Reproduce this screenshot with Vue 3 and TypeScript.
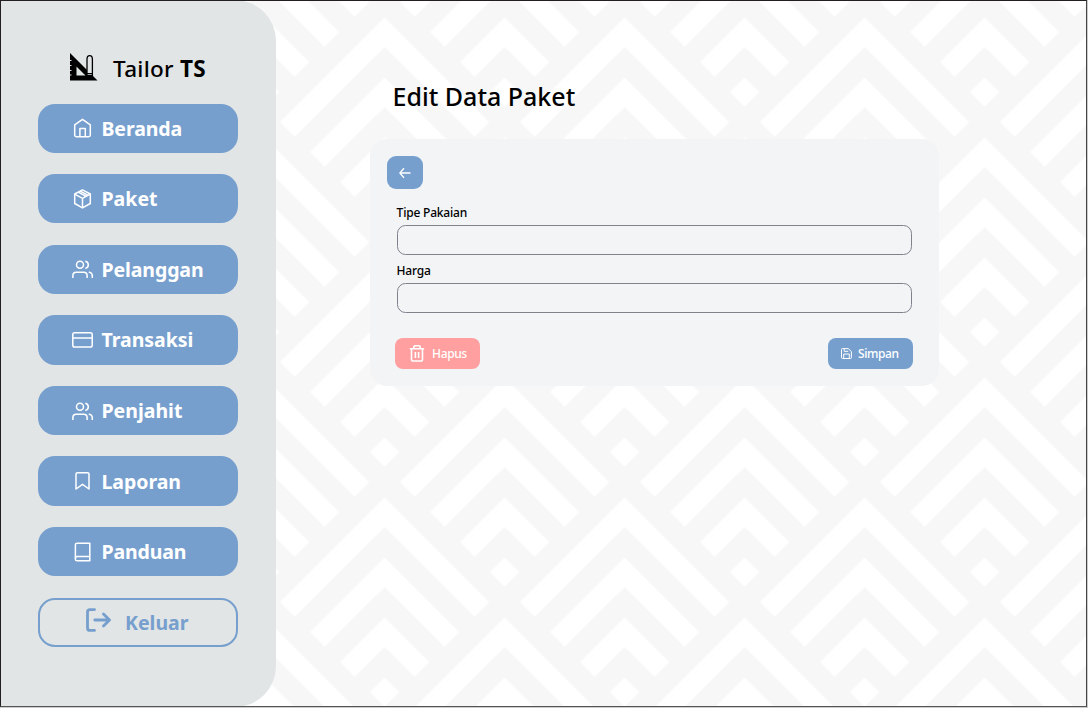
<script setup lang="ts">
interface MenuItem {
  label: string
  icon: string[]
  spacing: number
}

const users = [
  'M9 10.200a3.500 3.500 0 1 0 0-7 3.500 3.500 0 0 0 0 7z',
  'M1.900 20v-2.500a3.300 3.300 0 0 1 3.300-3.300h7.600a3.300 3.300 0 0 1 3.300 3.300V20',
  'M14.300 3.200c4 .8 4 6.400 0 7.200',
  'M17.800 13.900c2.100.5 3.500 1.900 3.500 3.800V20',
]

const menu: MenuItem[] = [
  { label: 'Beranda', spacing: -0.1, icon: ['M3.700 7.900 11.500 2.300l7.800 5.600V18a1.700 1.700 0 0 1-1.700 1.700H5.400A1.700 1.700 0 0 1 3.700 18z', 'M8.900 19.700v-8.300h5.400v8.300'] },
  { label: 'Paket', spacing: 0, icon: ['M11.500 1.900 19.300 6v9.500l-7.800 4.400-7.800-4.400V6z', 'M3.700 6.200l7.800 4.200 7.800-4.200M11.500 10.400v9.500M7.300 4.200l8 4.300M9.300 3.100l7.900 4.200'] },
  { label: 'Pelanggan', spacing: -0.1, icon: users },
  { label: 'Transaksi', spacing: -0.05, icon: ['M3.600 3.700h15.800a1.800 1.800 0 0 1 1.800 1.800v10.700a1.800 1.800 0 0 1-1.800 1.800H3.600a1.800 1.800 0 0 1-1.800-1.800V5.500a1.800 1.800 0 0 1 1.800-1.800z', 'M1.800 9h19.400'] },
  { label: 'Penjahit', spacing: 0, icon: users },
  { label: 'Laporan', spacing: -0.05, icon: ['M6.500 2.700h10a1.500 1.500 0 0 1 1.500 1.500V19l-6.500-4.700L5 19V4.200a1.500 1.500 0 0 1 1.500-1.500z'] },
  { label: 'Panduan', spacing: -0.15, icon: ['M6 2.200h12.800v17.600H6a1.600 1.600 0 0 1-1.600-1.600V3.800A1.600 1.600 0 0 1 6 2.200z', 'M4.400 17.200c0-1 .8-1.700 1.800-1.700h12.600'] },
]
</script>

<template>
  <div class="page">
    <svg class="backdrop" width="1088" height="708" aria-hidden="true">
      <defs>
        <g id="peak" fill="#fff">
          <path d="M0 0 104.700 104.700 90 119.400 0 29.700-90 119.400-104.700 104.700z" />
          <path d="M0 60 74.700 134.700 60 149.400 0 89.700-60 149.400-74.700 134.700z" />
          <path d="M0 120 44.700 164.700 30 179.400 0 149.700-30 179.400-44.700 164.700z" />
          <path d="M0 180 14.700 194.700 0 209.400-14.700 194.700z" />
        </g>
        <pattern id="peaks" width="240" height="240" x="264.670" y="17.400" patternUnits="userSpaceOnUse">
          <rect width="240" height="240" fill="#f7f7f7" />
          <use href="#peak" x="120" y="0" />
          <use href="#peak" x="0" y="120" />
          <use href="#peak" x="240" y="120" />
          <use href="#peak" x="0" y="-120" />
          <use href="#peak" x="240" y="-120" />
        </pattern>
      </defs>
      <rect width="1088" height="708" fill="url(#peaks)" />
    </svg>

    <aside class="sidebar">
      <div class="brand">
        <svg class="brand-mark" width="28" height="28" viewBox="0 0 28 28">
          <path fill="#000" fill-rule="evenodd" d="M0 0 27.500 27.500H0v-5h1.500v-1H0v-3.500h1.500v-1H0v-4h1.500v-1H0V8h1.500V7H0zM6.500 13.500v9h9z" />
          <path fill="#e1e5e5" stroke="#000" stroke-width="1.300" d="M17 22.300V6.500c0-2.200 1.300-3.800 2.700-3.800s2.700 1.600 2.700 3.800v15.800z" />
          <path stroke="#000" d="M17 20.500h5.500" />
        </svg>
        <span class="brand-name">Tailor <b>TS</b></span>
      </div>
      <nav class="menu">
        <a v-for="item in menu" :key="item.label" class="item">
          <svg width="23" height="22" viewBox="0 0 23 22" class="item-icon">
            <path v-for="d in item.icon" :key="d" :d="d" />
          </svg>
          <span :style="{ letterSpacing: item.spacing + 'px' }">{{ item.label }}</span>
        </a>
        <a class="item logout">
          <svg width="26" height="24" viewBox="0 0 26 24" class="logout-icon">
            <path d="M9.500 1.600H5a2.500 2.500 0 0 0-2.500 2.500v15.800A2.500 2.500 0 0 0 5 22.400h4.500M9.800 12H24M18.500 6l6 6-6 6" />
          </svg>
          <span>Keluar</span>
        </a>
      </nav>
    </aside>

    <main class="content">
      <h1>Edit Data Paket</h1>
      <form class="card" @submit.prevent>
        <button type="button" class="back" aria-label="Kembali">
          <svg width="12" height="12" viewBox="0 0 12 12"><path d="M11.500 6H.8M5 1.200.8 6 5 10.800" /></svg>
        </button>
        <div class="fields">
          <label class="type">Tipe Pakaian</label>
          <input type="text" />
          <label class="price">Harga</label>
          <input type="text" />
        </div>
        <div class="actions">
          <button type="button" class="action delete">
            <svg width="16" height="17" viewBox="0 0 16 17" stroke-width="1.600">
              <path d="M.8 3.700h14.400M4.800 3.500V2A1.200 1.200 0 0 1 6 .8h4A1.200 1.200 0 0 1 11.200 2v1.500M2.500 4v10.800a1.200 1.200 0 0 0 1.200 1.200h8.600a1.200 1.200 0 0 0 1.200-1.200V4M6.400 7v6M9.600 7v6" />
            </svg>
            <span>Hapus</span>
          </button>
          <button type="button" class="action save">
            <svg width="11" height="11" viewBox="0 0 11 11" stroke-width="1">
              <path d="M1.500.6h5.700l3.200 3v5.900a1 1 0 0 1-1 1H1.500a1 1 0 0 1-1-1v-8a1 1 0 0 1 1-1zM2.700 10.400V6h5.600v4.400M3.200.7v2.600h4" />
            </svg>
            <span>Simpan</span>
          </button>
        </div>
      </form>
    </main>
    <div class="frame"></div>
  </div>
</template>

<style>
body {
  margin: 0;
  overflow: hidden;
}
</style>

<style scoped>
.page {
  position: relative;
  display: flex;
  width: 1088px;
  height: 708px;
  overflow: hidden;
  color: #000;
  font-family: "Noto Sans", "Open Sans", sans-serif;
}
.backdrop {
  position: absolute;
  inset: 0;
}
.frame {
  position: absolute;
  inset: 0 1px 1px 0;
  border: 1px solid #231f20;
  border-right-color: #444;
  border-bottom-color: #555;
  box-shadow: 0 0 0 1px #ccc;
}
.sidebar {
  position: relative;
  box-sizing: border-box;
  width: 276px;
  height: 707px;
  padding: 53px 38px 0;
  border-radius: 0 41px 41px 0;
  background: #e1e5e5;
}
.brand {
  display: flex;
  align-items: flex-start;
  height: 50.500px;
  padding-left: 32px;
}
.brand-name {
  margin: -1px 0 0 15px;
  font-size: 22.500px;
  font-weight: 500;
  letter-spacing: 0.280px;
  line-height: 34px;
  white-space: nowrap;
}
.brand-name b {
  font-weight: 700;
}
.menu {
  display: flex;
  flex-direction: column;
  gap: 21.200px;
}
.item {
  display: flex;
  align-items: center;
  box-sizing: border-box;
  height: 49.400px;
  padding-left: 33px;
  border-radius: 17px;
  background: #779fce;
  color: #fff;
  font-size: 19.500px;
  font-weight: 700;
}
.item span {
  margin-left: 7.500px;
}
.item-icon {
  fill: none;
  stroke: #fff;
  stroke-width: 1.500;
  stroke-linejoin: round;
}
.logout {
  padding-left: 44.500px;
  border: 2px solid #779fce;
  background: transparent;
  color: #779fce;
}
.logout-icon {
  margin-top: -4px;
  fill: none;
  stroke: #779fce;
  stroke-width: 2.800;
  stroke-linecap: round;
  stroke-linejoin: round;
}
.item.logout span {
  margin-left: 14.500px;
}
.content {
  position: relative;
  padding: 77px 0 0 93.600px;
}
h1 {
  margin: 0 0 24px 23px;
  font-size: 25px;
  font-weight: 500;
  line-height: 38px;
}
.card {
  box-sizing: border-box;
  width: 569.400px;
  height: 247px;
  padding: 17px 26px 0 17px;
  border-radius: 17px;
  background: #f2f4f6;
}
button {
  display: flex;
  align-items: center;
  margin: 0;
  padding: 0;
  border: 0;
  color: #fff;
  font-family: inherit;
}
button svg {
  fill: none;
  stroke: #fff;
}
.back {
  justify-content: center;
  width: 36.500px;
  height: 33px;
  border-radius: 9px;
  background: #779fce;
}
.back svg {
  stroke-width: 1.300;
}
.fields {
  display: flex;
  flex-direction: column;
  padding: 12px 1.500px 0 10px;
}
label {
  height: 24px;
  font-size: 12px;
  font-weight: 500;
  letter-spacing: -0.200px;
  line-height: 24px;
}
.price {
  height: 28px;
  line-height: 31px;
}
input {
  box-sizing: border-box;
  width: 515px;
  height: 30px;
  padding: 0 10px;
  border: 1px solid #7f828d;
  border-radius: 8.500px;
  background: transparent;
  font: inherit;
  outline: none;
}
.actions {
  display: flex;
  justify-content: space-between;
  margin: 25px 0 0 8.500px;
}
.action {
  width: 85px;
  height: 31px;
  border-radius: 8px;
  font-size: 12px;
  font-weight: 500;
  letter-spacing: -0.400px;
}
.delete {
  padding-left: 14px;
  background: #ff9f9f;
}
.delete span {
  margin-left: 7px;
}
.save {
  padding-left: 13.500px;
  background: #779fce;
}
.save span {
  margin-left: 5.500px;
}
</style>
